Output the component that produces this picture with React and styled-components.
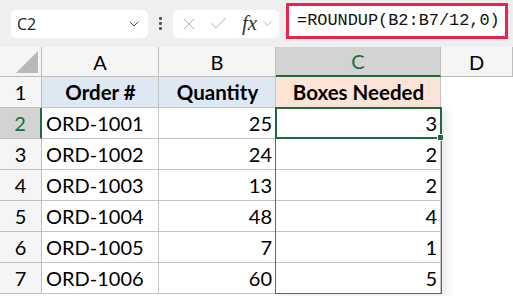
import React from "react"
import styled, { createGlobalStyle } from "styled-components"
import { X, Check, ChevronDown } from "lucide-react"

const GlobalStyle = createGlobalStyle`
  body {
    margin: 0;
    background: #ffffff;
    font-family: 'Lato', sans-serif;
  }
`

const Page = styled.div`
  width: 513px;
  height: 296px;
  overflow: hidden;
  background: #ffffff;
`

const Toolbar = styled.div`
  display: flex;
  align-items: center;
  height: 47px;
  box-sizing: border-box;
  padding: 0 5px 0 11px;
  background: #efefef;
`

const NameBox = styled.div`
  display: flex;
  align-items: center;
  justify-content: space-between;
  width: 137px;
  height: 28px;
  box-sizing: border-box;
  padding: 0 6px 0 6px;
  background: #ffffff;
  border-radius: 5px;
  font-family: 'Open Sans', sans-serif;
  font-size: 16px;
  color: #222;
`

const Dots = styled.div`
  display: flex;
  flex-direction: column;
  gap: 2px;
  margin: 0 11px 0 11px;

  span {
    width: 3px;
    height: 3px;
    background: #555;
    border-radius: 1px;
  }
`

const FxBox = styled.div`
  display: flex;
  align-items: center;
  width: 106px;
  height: 28px;
  box-sizing: border-box;
  padding: 0 2px 0 6px;
  gap: 9px;
  background: #ffffff;
  border-radius: 5px;
  color: #a8a8a8;
`

const Fx = styled.span`
  font-family: 'Liberation Serif', serif;
  font-style: italic;
  font-size: 21px;
  color: #333;
  margin-left: 4px;
  margin-right: -6px;
`

const FormulaBar = styled.div`
  display: flex;
  align-items: center;
  margin-left: 7px;
  flex: 1;
  height: 36px;
  margin-top: -6px;
  box-sizing: border-box;
  padding-left: 8px;
  background: #ffffff;
  border: 3px solid #e8254f;
  font-family: 'Liberation Mono', monospace;
  font-size: 16.9px;
  color: #111;
  white-space: nowrap;
`

const Sheet = styled.div`
  display: grid;
  grid-template-columns: 42px 117px 117px 165px 72px;
  grid-template-rows: 30px repeat(7, 31px);
  font-family: 'Lato', sans-serif;
  font-size: 20px;
  color: #000;
`

const ColHead = styled.div`
  grid-row: 1;
  grid-column: ${p => p.$c};
  display: flex;
  align-items: center;
  justify-content: center;
  box-sizing: border-box;
  background: ${p => (p.$active ? "#d3d3d3" : "#f5f5f5")};
  color: ${p => (p.$active ? "#1e6b41" : "#000")};
  border-right: 1px solid #bdbdbd;
  border-bottom: ${p => (p.$active ? "2px solid #1e6b41" : "1px solid #bdbdbd")};
`

const Corner = styled.div`
  grid-row: 1;
  grid-column: 1;
  position: relative;
  box-sizing: border-box;
  background: #f5f5f5;
  border-right: 1px solid #bdbdbd;
  border-bottom: 1px solid #bdbdbd;

  &::after {
    content: "";
    position: absolute;
    right: 3px;
    bottom: 3px;
    width: 0;
    height: 0;
    border-left: 22px solid transparent;
    border-bottom: 22px solid #b8b8b8;
  }
`

const RowHead = styled.div`
  grid-row: ${p => p.$r};
  grid-column: 1;
  display: flex;
  align-items: center;
  justify-content: center;
  box-sizing: border-box;
  background: ${p => (p.$active ? "#d3d3d3" : "#f5f5f5")};
  color: ${p => (p.$active ? "#1e6b41" : "#000")};
  border-bottom: 1px solid #bdbdbd;
  border-right: ${p => (p.$active ? "2px solid #1e6b41" : "1px solid #bdbdbd")};
`

const Cell = styled.div`
  grid-row: ${p => p.$r};
  grid-column: ${p => p.$c};
  display: flex;
  align-items: center;
  justify-content: ${p => (p.$num ? "flex-end" : p.$head ? "center" : "flex-start")};
  box-sizing: border-box;
  padding: 0 3px 0 4px;
  background: ${p => p.$bg || "#ffffff"};
  font-weight: ${p => (p.$head ? 700 : 400)};
  font-size: ${p => (p.$head ? "20.5px" : "20px")};
  border-right: 1px solid #c4c4c4;
  border-bottom: 1px solid #c4c4c4;
  white-space: nowrap;
`

const SpillRange = styled.div`
  grid-column: 4;
  grid-row: 3 / 9;
  margin: -1px -1px 0 -1px;
  border: 1.5px solid #2b6cc4;
  pointer-events: none;
  box-shadow: 5px 2px 8px rgba(0, 0, 0, 0.09);
`

const ActiveCell = styled.div`
  position: relative;
  grid-column: 4;
  grid-row: 3;
  margin: -1px -1px 0 -1px;
  border: 2px solid #1e6b41;
  pointer-events: none;
`

const FillHandle = styled.span`
  position: absolute;
  right: -4px;
  bottom: -4px;
  width: 5px;
  height: 5px;
  background: #1e6b41;
  border: 1px solid #ffffff;
`

const rows = [
  ["ORD-1001", 25, 3],
  ["ORD-1002", 24, 2],
  ["ORD-1003", 13, 2],
  ["ORD-1004", 48, 4],
  ["ORD-1005", 7, 1],
  ["ORD-1006", 60, 5],
]

export default function App() {
  return (
    <Page>
      <GlobalStyle />
      <Toolbar>
        <NameBox>
          C2
          <ChevronDown size={16} strokeWidth={1.4} color="#444" />
        </NameBox>
        <Dots>
          <span />
          <span />
          <span />
        </Dots>
        <FxBox>
          <X size={20} strokeWidth={1.1} />
          <Check size={21} strokeWidth={1.1} />
          <Fx>fx</Fx>
          <ChevronDown size={15} strokeWidth={1.3} />
        </FxBox>
        <FormulaBar>=ROUNDUP(B2:B7/12,0)</FormulaBar>
      </Toolbar>

      <Sheet>
        <Corner />
        <ColHead $c={2}>A</ColHead>
        <ColHead $c={3}>B</ColHead>
        <ColHead $c={4} $active>C</ColHead>
        <ColHead $c={5}>D</ColHead>

        <RowHead $r={2}>1</RowHead>
        <Cell $r={2} $c={2} $head $bg="#dde8f3">Order #</Cell>
        <Cell $r={2} $c={3} $head $bg="#dde8f3">Quantity</Cell>
        <Cell $r={2} $c={4} $head $bg="#fce4d6">Boxes Needed</Cell>

        {rows.map(([id, qty, boxes], i) => (
          <React.Fragment key={id}>
            <RowHead $r={i + 3} $active={i === 0}>{i + 2}</RowHead>
            <Cell $r={i + 3} $c={2}>{id}</Cell>
            <Cell $r={i + 3} $c={3} $num>{qty}</Cell>
            <Cell $r={i + 3} $c={4} $num>{boxes}</Cell>
          </React.Fragment>
        ))}

        <SpillRange />
        <ActiveCell>
          <FillHandle />
        </ActiveCell>
      </Sheet>
    </Page>
  )
}
